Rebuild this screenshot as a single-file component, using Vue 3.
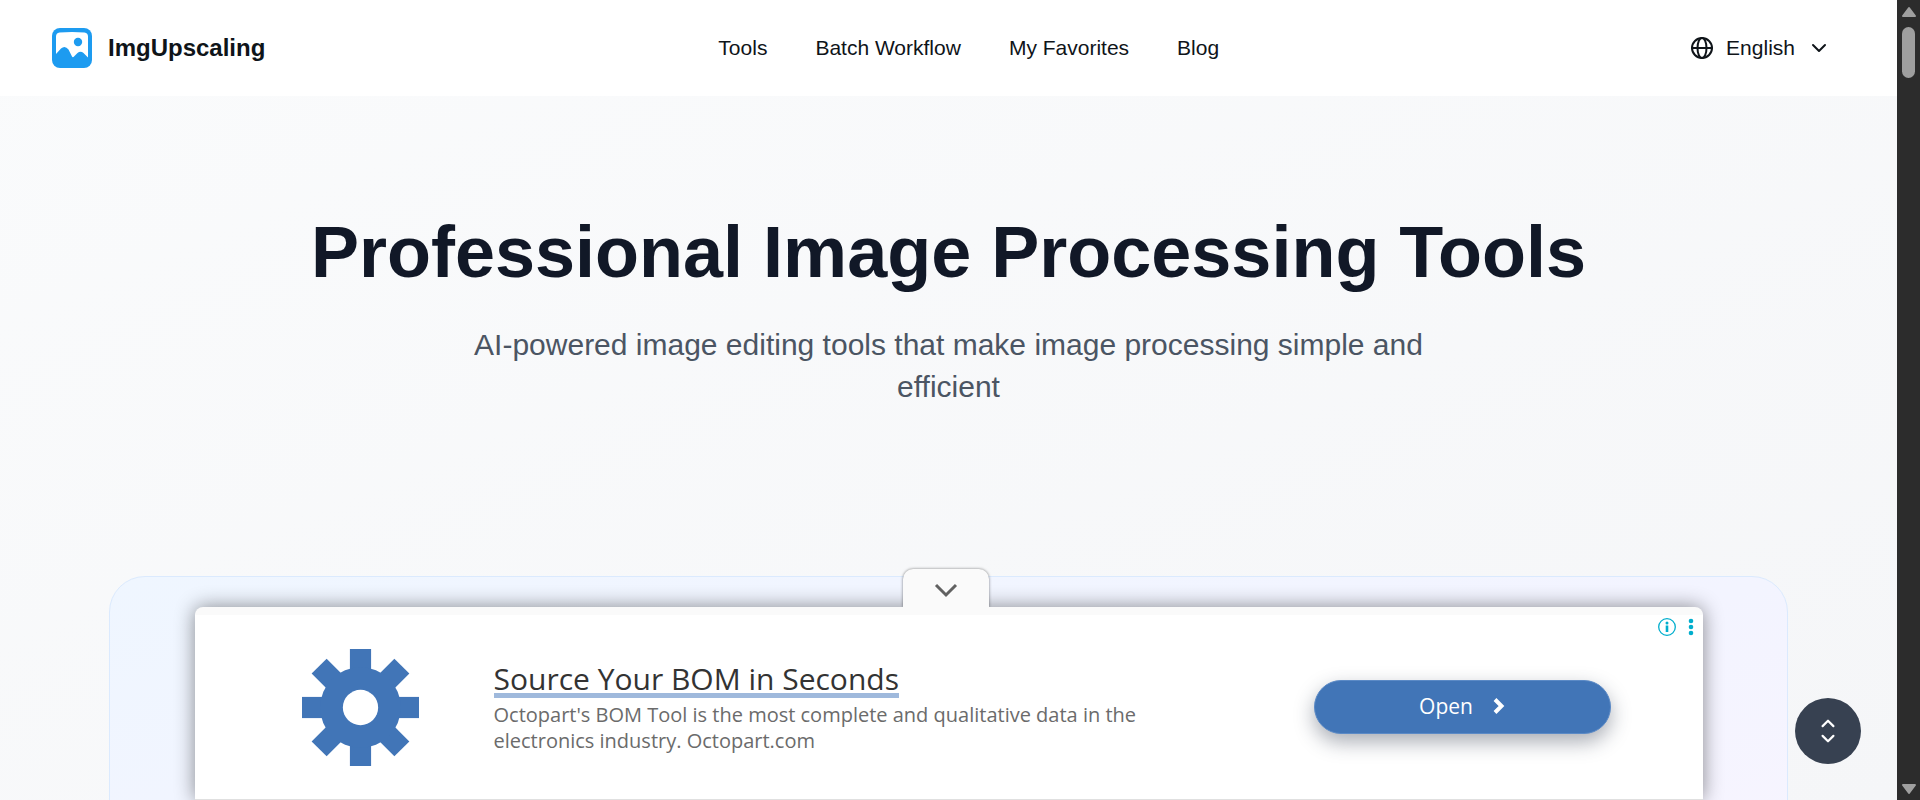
<template>
  <div class="window">
    <div class="page">
      <header class="navbar">
        <a href="#" class="brand">
          <svg class="brand-logo" viewBox="0 0 40 40" aria-hidden="true">
            <rect width="40" height="40" rx="8" fill="#1d9bf0" />
            <path d="M4 26V8.500Q4 5 7.500 4.500Q20 3.500 32.500 4.500Q36 5 36 8.500V29.500L31.500 25Q28.500 22.500 25.500 25L21.500 29Q20.500 29.500 20 28.500L16.500 21.500Q13 17 9 20.500Z" fill="#fff" />
            <circle cx="26" cy="14" r="4.200" fill="#1d9bf0" />
          </svg>
          <span>ImgUpscaling</span>
        </a>
        <nav class="nav-links">
          <a v-for="link in links" :key="link" href="#">{{ link }}</a>
        </nav>
        <label class="language">
          <svg class="globe" viewBox="0 0 24 24" aria-hidden="true">
            <circle cx="12" cy="12" r="10" />
            <ellipse cx="12" cy="12" rx="4.500" ry="10" />
            <path d="M2 12h20" />
          </svg>
          <select v-model="language" aria-label="Language">
            <option v-for="item in languages" :key="item">{{ item }}</option>
          </select>
          <svg class="caret" viewBox="0 0 16 16" aria-hidden="true">
            <path d="M2 5l6 6 6-6" />
          </svg>
        </label>
      </header>

      <main class="hero">
        <h1>Professional Image Processing Tools</h1>
        <p class="subtitle">AI-powered image editing tools that make image processing simple and efficient</p>
        <section class="panel"></section>
      </main>

      <aside v-show="adOpen" class="ad">
        <button class="ad-toggle" aria-label="Hide ad" @click="adOpen = false">
          <svg viewBox="0 0 24 16" aria-hidden="true">
            <path d="M2 3l10 10L22 3" />
          </svg>
        </button>
        <div class="ad-body">
          <svg class="gear" viewBox="-58 -58 116 116" aria-hidden="true">
            <rect v-for="angle in [0, 45, 90, 135]" :key="angle" x="-10.500" y="-58" width="21" height="116" :transform="`rotate(${angle})`" />
            <circle r="40" />
            <circle r="17.500" class="gear-hole" />
          </svg>
          <div class="ad-text">
            <a href="#" class="ad-title">Source Your BOM in Seconds</a>
            <p>Octopart's BOM Tool is the most complete and qualitative data in the electronics industry. Octopart.com</p>
          </div>
          <button class="ad-open">
            <span>Open</span>
            <svg viewBox="0 0 12 18" aria-hidden="true">
              <path d="M2 2.500L8.500 9L2 15.500" />
            </svg>
          </button>
        </div>
        <div class="ad-choices">
          <svg class="ad-info" viewBox="0 0 18 18" aria-hidden="true">
            <circle cx="9" cy="9" r="8.300" fill="none" stroke="#00aecd" stroke-width="1.300" />
            <circle cx="9" cy="5" r="1.500" />
            <path d="M7.700 7.500h2.600v6.500H7.700z" />
          </svg>
          <svg class="ad-dots" viewBox="0 0 6 18" aria-hidden="true">
            <circle cx="3" cy="3" r="2.300" />
            <circle cx="3" cy="9" r="2.300" />
            <circle cx="3" cy="15" r="2.300" />
          </svg>
        </div>
      </aside>

      <button class="fab" aria-label="Scroll">
        <svg viewBox="0 0 24 24" aria-hidden="true">
          <path d="M7 7.500l5-5 5 5M7 16.500l5 5 5-5" />
        </svg>
      </button>
    </div>

    <div class="scrollbar" aria-hidden="true">
      <svg class="arrow" viewBox="0 0 16 12">
        <path d="M8 2L14 10H2Z" />
      </svg>
      <div class="thumb"></div>
      <svg class="arrow arrow-down" viewBox="0 0 16 12">
        <path d="M8 10L14 2H2Z" />
      </svg>
    </div>
  </div>
</template>

<script setup>
import { ref } from 'vue'

const links = ['Tools', 'Batch Workflow', 'My Favorites', 'Blog']
const languages = ['English', 'Deutsch', 'Español', 'Français']
const language = ref('English')
const adOpen = ref(true)
</script>

<style>
body {
  margin: 0;
}
</style>

<style scoped>
.window {
  display: grid;
  grid-template-columns: minmax(0, 1fr) 23px;
  height: 100vh;
  overflow: hidden;
  font-family: "Liberation Sans", Arial, sans-serif;
  color: #0f1419;
}

.page {
  position: relative;
  overflow: hidden;
  background: linear-gradient(to bottom right, #fafbfc, #f5f6f8);
}

.navbar {
  display: flex;
  align-items: center;
  justify-content: space-between;
  height: 96px;
  padding: 0 52px;
  background: #fff;
}

.navbar a {
  color: inherit;
  text-decoration: none;
}

.brand {
  display: flex;
  align-items: center;
  gap: 16px;
  font-size: 24px;
  font-weight: 700;
}

.brand-logo {
  width: 40px;
  height: 40px;
}

.nav-links {
  display: flex;
  gap: 48px;
  font-size: 21px;
}

.language {
  display: flex;
  align-items: center;
  padding: 0 18px;
}

.language select {
  appearance: none;
  field-sizing: content;
  margin: 0 16px 0 12px;
  padding: 0;
  border: 0;
  background: none;
  color: inherit;
  font-family: inherit;
  font-size: 21px;
  line-height: 24px;
}

.language svg {
  fill: none;
  stroke: #0f1419;
  stroke-width: 2;
  stroke-linecap: round;
  stroke-linejoin: round;
}

.globe {
  width: 24px;
  height: 24px;
}

.caret {
  width: 16px;
  height: 16px;
}

.hero {
  padding: 120px 109px 0;
  text-align: center;
}

h1 {
  margin: 0 0 36px;
  font-size: 72px;
  line-height: 72px;
  color: #111827;
}

.subtitle {
  max-width: 998px;
  margin: 0 auto 168px;
  font-size: 30px;
  line-height: 42px;
  color: #4b5563;
}

.panel {
  min-height: 480px;
  border: 1px solid #dbeafe;
  border-radius: 36px;
  background: linear-gradient(to bottom right, #eff6ff, #f3f4ff, #faf5ff);
}

.ad {
  position: absolute;
  right: 0;
  bottom: 0;
  left: 0;
  box-sizing: border-box;
  width: 80%;
  max-width: 1508px;
  margin: 0 auto;
  border-top: 8px solid #fafafa;
  border-bottom: 1px solid #e0e0e0;
  border-radius: 8px 8px 0 0;
  background: #fff;
  box-shadow: 0 0 20px rgba(0, 0, 0, 0.45);
  font-family: "Open Sans", "Noto Sans", sans-serif;
}

.ad-toggle {
  position: absolute;
  bottom: calc(100% + 8px);
  left: 50%;
  width: 86px;
  height: 38px;
  margin-left: -46px;
  padding: 6px 0 0;
  border: 0;
  border-radius: 10px 10px 0 0;
  background: #fafafa;
  box-shadow: 0 0 3px rgba(0, 0, 0, 0.5);
  clip-path: inset(-8px -8px 0);
  cursor: pointer;
}

.ad-toggle svg {
  width: 24px;
  height: 16px;
  fill: none;
  stroke: #616161;
  stroke-width: 3;
}

.ad-body {
  display: flex;
  align-items: center;
  height: 184px;
  padding: 0 92px 0 107px;
}

.gear {
  flex: none;
  width: 117px;
  height: 117px;
  fill: #4175b7;
}

.gear-hole {
  fill: #fff;
}

.ad-text {
  flex: 1;
  margin: 4px 0 0 75px;
}

.ad-title {
  display: inline-block;
  border-bottom: 5px solid #9fb9dc;
  color: #333;
  font-size: 30px;
  line-height: 28px;
  text-decoration: none;
}

.ad-text p {
  max-width: 680px;
  margin: 4px 0 0;
  color: #6b6b6b;
  font-size: 20px;
  line-height: 26px;
}

.ad-open {
  display: flex;
  align-items: center;
  justify-content: center;
  gap: 20px;
  width: 297px;
  height: 54px;
  padding: 0 0 2px;
  border: 1px solid #5b8ac6;
  border-radius: 27px;
  background: #4175b7;
  box-shadow: 0 8px 20px rgba(40, 50, 70, 0.4);
  color: #fff;
  font-family: inherit;
  font-size: 21px;
  cursor: pointer;
}

.ad-open svg {
  width: 12px;
  height: 18px;
  fill: none;
  stroke: #fff;
  stroke-width: 4;
}

.ad-choices {
  position: absolute;
  top: 3px;
  right: 9px;
  display: flex;
  gap: 12px;
  fill: #00aecd;
}

.ad-info {
  width: 18px;
  height: 18px;
}

.ad-dots {
  width: 6px;
  height: 18px;
}

.fab {
  position: absolute;
  right: 36px;
  bottom: 36px;
  display: grid;
  place-items: center;
  width: 66px;
  height: 66px;
  padding: 0;
  border: 0;
  border-radius: 50%;
  background: #374151;
  cursor: pointer;
}

.fab svg {
  width: 26px;
  height: 26px;
  fill: none;
  stroke: #fff;
  stroke-width: 2;
  stroke-linecap: round;
  stroke-linejoin: round;
}

.scrollbar {
  display: flex;
  flex-direction: column;
  align-items: center;
  padding: 6px 0 5px;
  background: #2c2c2c;
}

.arrow {
  width: 16px;
  height: 12px;
  fill: #9f9f9f;
  stroke: #9f9f9f;
  stroke-width: 2;
  stroke-linejoin: round;
}

.arrow-down {
  margin-top: auto;
}

.thumb {
  width: 13px;
  height: 51px;
  margin-top: 9px;
  border-radius: 7px;
  background: #9f9f9f;
}
</style>
